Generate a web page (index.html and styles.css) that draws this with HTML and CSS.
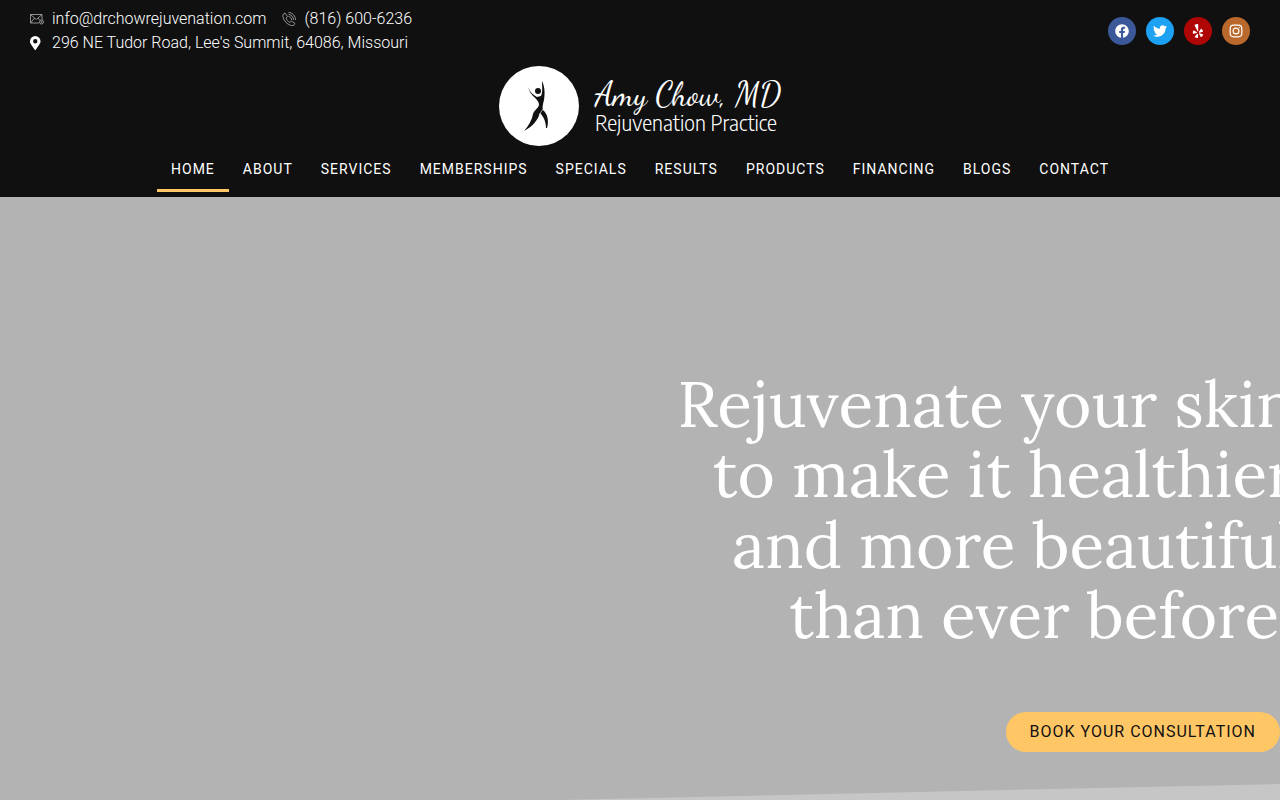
FILE: index.html
```html
<!DOCTYPE html>
<html lang="en">
<head>
    <meta charset="UTF-8">
    <meta name="viewport" content="width=device-width, initial-scale=1.0">
    <title>Amy Chow, MD - Rejuvenation Practice</title>
    <link rel="stylesheet" href="styles.css">
</head>
<body>
    <header class="site-header">
        <!-- Contact details and social links -->
        <div class="top-bar">
            <ul class="contact-list">
                <li>
                    <a href="mailto:info@drchowrejuvenation.com">
                        <svg class="contact-icon thin" viewBox="0 0 28 28"><path d="M18 22H1V5h23v11M1 5l11.500 10L24 5M1 22l8-10M16 12l4 5"/><circle cx="23" cy="20" r="4"/><circle cx="23" cy="20" r="1"/></svg>
                        <span>info@drchowrejuvenation.com</span>
                    </a>
                </li>
                <li>
                    <a href="tel:8166006236">
                        <svg class="contact-icon thin" viewBox="0 0 28 28"><path d="M2 5l4-3 5 7-3 3c1 4 4 7 8 9l3-3 7 5-3 4c-9 2-23-10-21-22zM13 9c4 0 6 3 6 7M13 5c6 0 10 5 10 11M13 1c8 0 14 7 14 15"/></svg>
                        <span>(816) 600-6236</span>
                    </a>
                </li>
                <li>
                    <a href="#map">
                        <svg class="contact-icon" viewBox="0 0 512 512"><path fill="#fff" fill-rule="evenodd" d="M172 502C27 291 0 270 0 192a192 192 0 1 1 384 0c0 78-27 99-172 310-10 13-30 13-40 0zm20-230a80 80 0 1 0 0-160 80 80 0 0 0 0 160z"/></svg>
                        <span>296 NE Tudor Road, Lee's Summit, 64086, Missouri</span>
                    </a>
                </li>
            </ul>
            <div class="social">
                <a class="facebook" href="#facebook" aria-label="Facebook">
                    <svg viewBox="0 0 512 512"><path d="M504 256C504 119 393 8 256 8S8 119 8 256c0 123.800 90.700 226.400 209.300 245V327.700h-63V256h63v-54.600c0-62.200 37-96.500 93.700-96.500 27.100 0 55.500 4.800 55.500 4.800v61h-31.300c-30.800 0-40.400 19.100-40.400 38.700V256h68.800l-11 71.700h-57.800V501C413.300 482.400 504 379.800 504 256z"/></svg>
                </a>
                <a class="twitter" href="#twitter" aria-label="Twitter">
                    <svg viewBox="0 0 512 512"><path d="M459.400 151.700c.3 4.500.3 9.100.3 13.600 0 138.700-105.600 298.600-298.600 298.600-59.500 0-114.700-17.200-161.100-47.100 8.400 1 16.600 1.300 25.300 1.300 49 0 94.200-16.600 130.300-44.800-46.100-1-84.800-31.200-98.100-72.800 6.500 1 13 1.600 19.800 1.600 9.400 0 18.800-1.300 27.600-3.600-48.100-9.700-84.100-52-84.100-103v-1.300c14 7.800 30.200 12.700 47.400 13.300-28.300-18.800-46.800-51-46.800-87.400 0-19.500 5.200-37.400 14.300-53 51.700 63.700 129.300 105.300 216.400 109.800-1.600-7.800-2.600-15.900-2.600-24 0-57.800 46.800-104.900 104.900-104.900 30.200 0 57.500 12.700 76.700 33.100 23.700-4.500 46.500-13.300 66.600-25.300-7.800 24.400-24.400 44.800-46.100 57.800 21.100-2.300 41.600-8.100 60.400-16.200-14.300 20.800-32.200 39.300-52.600 54.300z"/></svg>
                </a>
                <a class="yelp" href="#yelp" aria-label="Yelp">
                    <svg viewBox="0 0 384 512"><path d="M42.900 240.300l99.600 48.600c19.200 9.400 16.200 37.500-4.500 42.700L30.500 358.500a22.800 22.800 0 0 1-28.200-19.600 197 197 0 0 1 9-85.300 22.800 22.800 0 0 1 31.600-13.300zM87 482.400a199 199 0 0 0 80.100 29.200c12 2 23-7 26-20l4-111c.7-21.300-25.500-31.500-39.800-16.100l-74.200 82.400a22.800 22.800 0 0 0 3.900 35.500zM232 370l58.800 94a22.900 22.900 0 0 0 34 5.500 198 198 0 0 0 52.600-67.800 22.900 22.900 0 0 0-15-31l-105-34c-20.300-6-37.800 16-25.400 33.300zm144-115a199 199 0 0 0-52-70 22.800 22.800 0 0 0-35 5l-62 91c-12 18 4.700 40 25 35l106-30a23 23 0 0 0 18-31zM65 48.200l104 208c8 17 31 10 31-9V22c0-14-10-24-24-22-36 3-71 11-102 24-13 5-17 15-9 24.200z"/></svg>
                </a>
                <a class="instagram" href="#instagram" aria-label="Instagram">
                    <svg class="outline" viewBox="0 0 24 24"><rect x="2" y="2" width="20" height="20" rx="6"/><circle cx="12" cy="12" r="5"/><circle class="dot" cx="18" cy="6" r="1"/></svg>
                </a>
            </div>
        </div>

        <a class="logo" href="#home">
            <svg class="logo-mark" viewBox="0 0 80 80">
                <circle cx="40" cy="40" r="40" fill="#fff"/>
                <circle cx="39" cy="25" r="3" fill="#111"/>
                <path fill="#111" d="M29 21C31 26 34 29 38 31L42 30C44 26 43 20 43 15C46 21 46 28 45 34C44 38 43 41 44 44C49 48 50 56 48 62L47 62C47 55 44 50 41 47C39 54 33 61 25 65C30 59 33 54 34 48C35 44 39 43 40 39C40 35 37 33 34 30C31 27 30 24 29 21Z"/>
                <path fill="none" stroke="#fff" stroke-width="0.600" d="M44 43l-4 6"/>
            </svg>
            <span class="logo-text">
                <span class="logo-name">Amy Chow, MD</span>
                <span class="logo-tagline">Rejuvenation Practice</span>
            </span>
        </a>

        <nav class="main-nav">
            <a class="active" href="#home">HOME</a>
            <a href="#about">ABOUT</a>
            <a href="#services">SERVICES</a>
            <a href="#memberships">MEMBERSHIPS</a>
            <a href="#specials">SPECIALS</a>
            <a href="#results">RESULTS</a>
            <a href="#products">PRODUCTS</a>
            <a href="#financing">FINANCING</a>
            <a href="#blogs">BLOGS</a>
            <a href="#contact">CONTACT</a>
        </nav>
    </header>

    <!-- Hero -->
    <main class="hero">
        <h1>Rejuvenate your skin<br>to make it healthier<br>and more beautiful<br>than ever before.</h1>
        <button class="book-button" type="button">BOOK YOUR CONSULTATION</button>
        <svg class="hero-divider" viewBox="0 0 1280 16" preserveAspectRatio="none"><path fill="#c6c6c6" d="M560 16L1280 0V16z"/></svg>
    </main>
</body>
</html>
```

FILE: styles.css
```css
* {
    box-sizing: border-box;
}

body {
    display: flex;
    flex-direction: column;
    min-height: 100vh;
    margin: 0;
    font-family: Roboto, "Liberation Sans", sans-serif;
    color: #fff;
    overflow-x: hidden;
}

a {
    color: inherit;
    text-decoration: none;
}

.site-header {
    background: #101010;
    padding-bottom: 5px;
}

.top-bar {
    display: flex;
    justify-content: space-between;
    align-items: center;
    padding: 7px 30px 0;
}

.contact-list {
    display: flex;
    flex-wrap: wrap;
    column-gap: 16px;
    max-width: 480px;
    margin: 0;
    padding: 0;
    list-style: none;
    font-size: 16px;
    font-weight: 300;
    line-height: 24px;
}

.contact-list a {
    display: flex;
    align-items: center;
    gap: 8px;
}

.contact-icon {
    width: 14px;
    height: 14px;
}

.thin {
    fill: none;
    stroke: #bbb;
    stroke-width: 1.5;
}

.social {
    display: flex;
    gap: 10px;
}

.social a {
    display: flex;
    align-items: center;
    justify-content: center;
    width: 28px;
    height: 28px;
    border-radius: 50%;
}

.social svg {
    width: 14px;
    height: 14px;
    fill: #fff;
}

.social .outline {
    fill: none;
    stroke: #fff;
    stroke-width: 2;
}

.social .dot {
    fill: #fff;
    stroke: none;
}

.facebook {
    background: #3b5998;
}

.twitter {
    background: #1da1f2;
}

.yelp {
    background: #af0606;
}

.instagram {
    background: #b9692b;
}

.logo {
    display: flex;
    justify-content: center;
    align-items: center;
    gap: 16px;
    padding: 11px 0;
}

.logo-mark {
    width: 80px;
    height: 80px;
}

.logo-text {
    display: flex;
    flex-direction: column;
}

.logo-name {
    font-family: "Dancing Script", "Liberation Serif", serif;
    font-size: 33px;
    line-height: 33px;
}

.logo-tagline {
    font-family: "Encode Sans Semi Condensed", "Encode Sans Condensed", "Encode Sans", "Open Sans", sans-serif;
    font-size: 21px;
    font-weight: 300;
    line-height: 24px;
}

.main-nav {
    display: flex;
    justify-content: center;
    font-size: 14px;
    letter-spacing: 1px;
    line-height: 20px;
}

.main-nav a {
    padding: 2px 14px 10px;
    border-bottom: 3px solid transparent;
}

.main-nav .active {
    border-color: #ffc666;
}

.hero {
    position: relative;
    flex: 1;
    display: flex;
    flex-direction: column;
    align-items: flex-end;
    padding: 172px 0 48px;
    background: #b3b3b3;
    overflow: hidden;
}

.hero h1 {
    margin: 0 -15px 61px 0;
    font-family: Lora, "Liberation Serif", serif;
    font-size: 64px;
    font-weight: 400;
    line-height: 1.1;
    text-align: right;
    white-space: nowrap;
}

.book-button {
    padding: 0 24px;
    border: none;
    border-radius: 20px;
    background: #ffc666;
    color: #111;
    font-family: inherit;
    font-size: 16px;
    letter-spacing: 1px;
    line-height: 40px;
    cursor: pointer;
}

.hero-divider {
    position: absolute;
    left: 0;
    bottom: 0;
    width: 100%;
    height: 16px;
}
```
